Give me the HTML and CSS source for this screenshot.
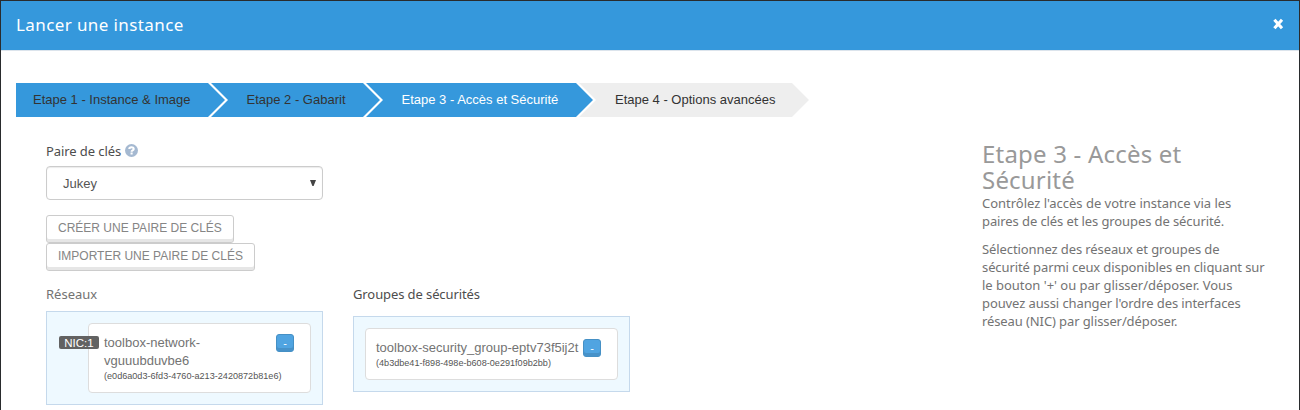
FILE: index.html
```html
<!DOCTYPE html>
<html lang="fr">
<head>
<meta charset="utf-8">
<title>Lancer une instance</title>
<link rel="stylesheet" href="styles.css">
</head>
<body>
<div class="modal">
  <header class="modal-header">
    <h1 class="modal-title">Lancer une instance</h1>
    <svg class="close" width="12" height="12" viewBox="0 0 12 12"><path d="M2.4 1.8 10 10.2M10 1.8 2.4 10.2" stroke="#fff" stroke-width="3.1"/></svg>
  </header>
  <nav class="steps">
    <div class="step first">Etape 1 - Instance &amp; Image</div>
    <div class="step second">Etape 2 - Gabarit</div>
    <div class="step third">Etape 3 - Accès et Sécurité</div>
    <div class="step fourth">Etape 4 - Options avancées</div>
  </nav>
  <div class="content">
    <main class="form">
      <div class="label key-label"><span class="key-text">Paire de clés</span>
        <svg class="help" width="13" height="13" viewBox="0 0 13 13"><circle cx="6.5" cy="6.5" r="6.5" fill="#a5b9d1"/><path d="M4.3 5C4.3 2.6 8.7 2.6 8.7 4.9 8.7 6.5 6.6 6.1 6.6 7.7M6.6 8.6V10.5" fill="none" stroke="#fff" stroke-width="2.1"/></svg>
      </div>
      <div class="select"><span>Jukey</span><svg width="6" height="6" viewBox="0 0 6 6"><path d="M0 0H6L3.6 6H2.4Z" fill="#444"/></svg></div>
      <div class="buttons">
        <div class="btn create">CRÉER UNE PAIRE DE CLÉS</div>
        <div class="btn import">IMPORTER UNE PAIRE DE CLÉS</div>
      </div>
      <div class="columns">
        <section class="column">
          <h2 class="label networks-label">Réseaux</h2>
          <div class="dropzone networks">
            <div class="card network-card">
              <span class="nic">NIC:1</span>
              <div class="card-text"><div class="name">toolbox-network-<br>vguuubduvbe6</div><div class="uuid">(e0d6a0d3-6fd3-4760-a213-2420872b81e6)</div></div>
              <span class="minus">-</span>
            </div>
          </div>
        </section>
        <section class="column">
          <h2 class="label groups-label">Groupes de sécurités</h2>
          <div class="dropzone groups">
            <div class="card group-card">
              <div class="card-text"><div class="name">toolbox-security_group-eptv73f5ij2t</div><div class="uuid">(4b3dbe41-f898-498e-b608-0e291f09b2bb)</div></div>
              <span class="minus">-</span>
            </div>
          </div>
        </section>
      </div>
    </main>
    <aside class="help-text">
      <h2 class="help-title">Etape 3 - Accès et<br>Sécurité</h2>
      <p><span class="loose">Contrôlez l'accès de votre instance via les</span><br>paires de clés et les groupes de sécurité.</p>
      <p>Sélectionnez des réseaux et groupes de<br>sécurité parmi ceux disponibles en cliquant sur<br><span class="loose">le bouton '+' ou par glisser/déposer. Vous</span><br>pouvez aussi changer l'ordre des interfaces<br>réseau (NIC) par glisser/déposer.</p>
    </aside>
  </div>
</div>
</body>
</html>
```
FILE: styles.css
```css
* { box-sizing: border-box; }
body { margin: 0; background: #fff; font-family: "Liberation Sans", Arial, sans-serif; font-size: 13px; line-height: 18px; color: #737373; }
.modal { height: 410px; overflow: hidden; border: 1px solid #292b2d; border-bottom: 0; background: #fff; }
.modal-header { height: 50px; display: flex; justify-content: space-between; align-items: flex-start; padding: 14px 15px 0; background: #3598dc; border-bottom: 1px solid #dce4ec; }
.modal-title { margin: 0; color: #fff; font: 400 17px/20px "Noto Sans", sans-serif; letter-spacing: .4px; }
.close { display: block; margin-top: 3px; }
.steps { display: flex; margin: 32px 0 0 15px; height: 34px; }
.step { height: 34px; line-height: 33px; color: #333; background: #3598dc; white-space: nowrap; flex: none; padding-left: 35.5px; margin-left: -14px; clip-path: polygon(0 0, calc(100% - 17px) 0, 100% 17px, calc(100% - 17px) 100%, 0 100%, 17px 17px); }
.first { width: 209px; margin-left: 0; padding-left: 17px; clip-path: polygon(0 0, 192px 0, 100% 17px, 192px 100%, 0 100%); }
.second { width: 169px; }
.third { width: 227px; color: #fff; }
.fourth { width: 230px; padding-left: 36px; background: #eee; }
.content { display: flex; justify-content: space-between; padding: 0 29px 0 45px; }
.form { width: 584px; padding-top: 25px; }
.label { margin: 0; font: 400 13px/18px "Noto Sans", sans-serif; color: #4d4d4d; white-space: nowrap; }
.key-label { display: flex; gap: 4px; letter-spacing: -.08px; }
.key-text { width: 75px; }
.help { margin-top: 2px; }
.select { width: 277px; height: 34px; margin-top: 6px; padding: 1px 6px 0 16px; display: flex; align-items: center; justify-content: space-between; border: 1px solid #ccc; border-radius: 4px; box-shadow: inset 0 1px 1px rgba(0,0,0,.08); color: #555; }
.select svg { margin-bottom: 2px; }
.buttons { margin-top: 15px; }
.btn { height: 28px; padding-left: 11px; border: 1px solid #ccc; border-radius: 3px; box-shadow: inset 0 -3px 0 #e6e6e6; font-size: 12px; line-height: 24px; color: #858585; white-space: nowrap; }
.create { width: 188px; }
.import { width: 209px; }
.columns { display: flex; gap: 30px; margin-top: 14px; }
.column { width: 277px; }
.networks-label { color: #737373; }
.groups-label { letter-spacing: -.1px; }
.dropzone { border: 1px solid #c5d9ec; background: #eef9ff; }
.networks { height: 94px; margin-top: 8px; padding: 11px 11px 0 41px; }
.groups { height: 76px; margin-top: 13px; padding: 11px; }
.card { position: relative; display: flex; justify-content: space-between; background: #fff; border: 1px solid #ddd; border-radius: 4px; padding: 10px 16px 0 15px; }
.network-card { height: 70px; }
.group-card { height: 52px; padding-left: 10px; }
.card-text { width: 0; white-space: nowrap; }
.name { font-size: 13px; line-height: 18px; }
.uuid { font-size: 9.1px; line-height: 13px; color: #555; }
.nic { position: absolute; left: -30px; top: 12px; width: 40px; height: 13px; border-radius: 2px; background: #626262; color: #fff; font-size: 11.5px; line-height: 14px; text-align: center; }
.minus { width: 18px; height: 18px; flex: none; border: 1px solid #4590c5; border-radius: 3px; background: #50a4e1; box-shadow: inset 0 -3px 0 #4792c9; color: #fff; font-size: 11px; line-height: 17px; text-align: center; }
.help-text { width: 288px; padding-top: 24px; font-family: "Noto Sans", sans-serif; white-space: nowrap; }
.help-title { margin: 0 0 1px; font-size: 24px; line-height: 26px; font-weight: 400; letter-spacing: .2px; color: #999; }
.help-text p { margin: 0 0 10px; line-height: 18px; letter-spacing: -.1px; }
.loose { letter-spacing: -.02px; }
```
